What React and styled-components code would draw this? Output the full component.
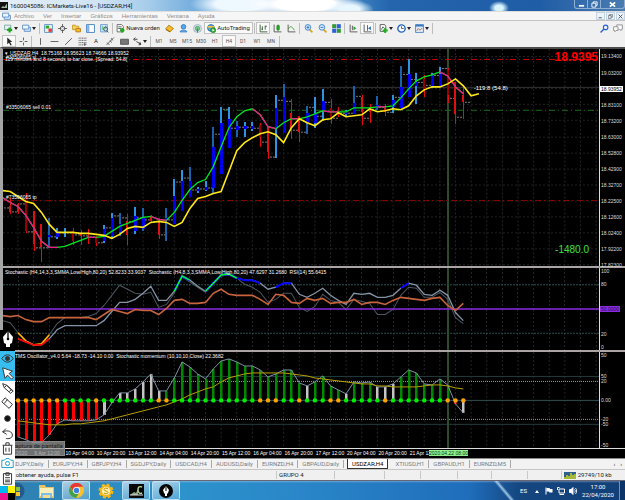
import React from 'react';
import styled, { createGlobalStyle, css } from 'styled-components';

const GlobalStyle = createGlobalStyle`
  * { box-sizing: border-box; }
  body {
    margin: 0;
    background: #000;
    font-family: Roboto, "Liberation Sans", sans-serif;
    font-size: 6px;
    line-height: 8px;
    color: #222;
  }
  button {
    margin: 0;
    padding: 0;
    border: 0;
    background: none;
    font: inherit;
    color: inherit;
  }
  svg { display: block; flex: none; }
`;

const Screen = styled.div`
  position: relative;
  display: flex;
  flex-direction: column;
  min-height: 100vh;
  overflow: hidden;
`;

/* ---------- window frame ---------- */

const TitleBar = styled.header`
  display: flex;
  align-items: center;
  gap: 2px;
  height: 11px;
  color: #111;
  white-space: nowrap;
  background:
    radial-gradient(ellipse 10px 7px at 499px 8px, #d9f4ff 40%, transparent 100%),
    radial-gradient(ellipse 24px 9px at 350px 9px, #e8f7ff 40%, transparent 100%),
    radial-gradient(ellipse 60px 14px at 305px 4px, #fff 50%, transparent 100%),
    radial-gradient(ellipse 50px 14px at 240px 4px, #eef8ff 50%, transparent 100%),
    linear-gradient(90deg, #e3eef7 0, #cfe3f3 100px, #a4cbea 150px, #78b0de 190px, #4a8fcb 340px, #2465ad 390px, #1f5da6 540px, #4a7bb0 625px);
`;

const WindowButtons = styled.div`
  display: flex;
  align-self: flex-start;
  margin-left: auto;
  height: 9px;
  border: 1px solid #8fb0d4;
  border-top: 0;
  border-radius: 0 0 3px 3px;

  button {
    display: flex;
    align-items: center;
    justify-content: center;
    width: 13px;
    border-right: 1px solid #8fb0d4;
  }

  button:last-child {
    width: 23px;
    border-right: 0;
  }
`;

const MenuBar = styled.nav`
  display: flex;
  align-items: center;
  gap: 9px;
  height: 10px;
  padding-left: 2px;
  background: #f6f6f6;
  border-bottom: 1px solid #c4c4c4;
  border-top: 1px solid #ddd;
  color: #8d8d8d;
  font-family: "Liberation Sans", sans-serif;

  > svg { margin-right: -6px; }
`;

const DocButtons = styled.div`
  display: flex;
  gap: 1px;
  margin-left: auto;

  button {
    display: flex;
    align-items: center;
    justify-content: center;
    width: 9px;
    height: 8px;
    border: 1px solid #c3d3e3;
    background: #eaf2fa;
  }
`;

const Toolbar = styled.div`
  display: flex;
  align-items: center;
  height: ${props => props.$height}px;
  padding-left: 2px;
  background: #f0f0f0;
  white-space: nowrap;
`;

const ToolButton = styled.button`
  display: flex;
  align-items: center;
  justify-content: center;
  gap: 1px;
  width: ${props => props.$wide || 14}px;
  height: 12px;
  flex: none;
  ${props => props.$period && css`
    font-size: 5px;
    color: #555;
  `}
  ${props => props.$pressed && css`
    background: #f9f9f9;
    border: 1px solid #c2c2c2;
  `}
`;

const Separator = styled.span`
  flex: none;
  width: 1px;
  height: 11px;
  margin: 0 1px;
  background: #bdbdbd;
`;

const ToolbarEnd = styled.div`
  display: flex;
  margin-left: auto;
`;

/* ---------- chart ---------- */

const ChartWindow = styled.main`
  flex: 1;
  display: flex;
  flex-direction: column;
  background: #000;
  border: solid #8a8a8a;
  border-width: 2px 0 1px 3px;
  border-top-color: #4c4c4c;
  border-left-color: #a5a5a5;
  color: #fff;
  font-family: "Liberation Sans", sans-serif;
  font-size: 5px;
  line-height: 6px;
  white-space: pre;
`;

const Panel = styled.section`
  flex: ${props => props.$share} 1 0;
  display: flex;
  min-height: 0;
  border-bottom: ${props => (props.$last ? '1px solid #ddd' : '2px solid #aaa4a4')};
`;

const Plot = styled.div`
  position: relative;
  flex: 1;
  min-width: 0;
  overflow: hidden;

  svg {
    position: absolute;
    width: 100%;
    height: 100%;
  }
`;

const Axis = styled.div`
  position: relative;
  width: 26px;
  border-left: 1px solid #ddd;
`;

const AxisLabel = styled.span`
  position: absolute;
  left: 0;
  padding: 0 1px;
  transform: translateY(-50%);
  color: #ddd;
  ${props => props.$tone === 'price' && css`
    background: #fff;
    color: #000;
  `}
  ${props => props.$tone === 'middle' && css`
    background: #8a2be2;
    color: #201040;
  `}
`;

const PanelTitle = styled.div`
  position: absolute;
  top: ${props => props.$top || 1}px;
  left: ${props => props.$left || 2}px;
`;

const OrderLabel = styled.div`
  position: absolute;
  left: 3px;
  transform: translateY(-100%);
`;

const BigPrice = styled.div`
  position: absolute;
  top: 2px;
  right: 1px;
  font-size: 12px;
  line-height: 13px;
  font-weight: bold;
  color: #f00;
`;

const Profit = styled.div`
  position: absolute;
  right: 10px;
  bottom: 10px;
  font-size: 10px;
  line-height: 12px;
  color: #3ce03c;
`;

const SpreadNote = styled.div`
  position: absolute;
  font-size: 6px;
  line-height: 8px;
  transform: translateY(-50%);
`;

const TimeAxis = styled.div`
  position: relative;
  display: flex;
  height: 9px;
  padding: 1px 26px 0 0;
  overflow: hidden;
`;

const TimeLabel = styled.span`
  flex: 0 0 5.25%;
`;

const TimeCursor = styled.span`
  position: absolute;
  background: #90ee90;
  color: #064006;
`;

/* ---------- bottom ---------- */

const Tabs = styled.div`
  display: flex;
  align-items: center;
  height: 11px;
  padding-left: 4px;
  background: #f2f2f2;
  border-bottom: 1px solid #c6c6c6;
`;

const Tab = styled.button`
  height: 8px;
  padding: 0 4px;
  flex: none;
  color: #7c7c7c;
  border-right: 1px solid #a8a8a8;
  line-height: 8px;
  ${props => props.$active && css`
    height: 10px;
    margin: 0 3px;
    background: #fff;
    color: #000;
    border: 1px solid #333;
    border-top: 0;
  `}
`;

const TabScroll = styled.div`
  display: flex;
  gap: 5px;
  margin-left: auto;
  padding-right: 3px;
`;

const StatusBar = styled.footer`
  display: flex;
  align-items: center;
  height: 11px;
  background: #f0f0f0;
  border-bottom: 1px solid #667;
  white-space: nowrap;
`;

const StatusCell = styled.div`
  display: flex;
  align-items: center;
  gap: 2px;
  height: 8px;
  flex: ${props => props.$share} 1 0;
  padding-left: 2px;
  border-right: 1px solid #c8c8c8;

  &:last-child { border-right: 0; }
`;

const Taskbar = styled.div`
  display: flex;
  align-items: center;
  gap: 2px;
  height: 19px;
  padding-left: 2px;
  color: #fff;
  background:
    linear-gradient(50deg, transparent 43%, rgba(190, 225, 250, 0.8) 50%, transparent 57%) 82% 0 / 28px 19px no-repeat,
    linear-gradient(180deg, rgba(255, 255, 255, 0.3) 0, transparent 2px),
    linear-gradient(90deg, #2f7fae 0, #2c93cc 180px, #2a86c8 300px, #1f6dbb 470px, #15467f 520px, #123f78 625px);
`;

const TaskButton = styled.button`
  display: flex;
  align-items: center;
  justify-content: center;
  width: 28px;
  height: 19px;
  flex: none;
  ${props => props.$open && css`
    border: 1px solid rgba(210, 240, 255, 0.7);
    border-radius: 2px;
    background: linear-gradient(160deg, rgba(255, 255, 255, 0.6), rgba(190, 225, 245, 0.25));
  `}
`;

const Tray = styled.div`
  display: flex;
  align-items: center;
  gap: 4px;
  margin-left: auto;
`;

const Clock = styled.div`
  width: 34px;
  text-align: center;
`;

const ShowDesktop = styled.button`
  width: 6px;
  height: 19px;
  border-left: 1px solid #6a93bd;
  background: #0d3468;
`;

/* ---------- drawing tool floating over the desktop ---------- */

const PenPanel = styled.aside`
  position: absolute;
  left: 0;
  bottom: 0;
  width: 15px;
  background: #fff;
`;

const PenHead = styled.div`
  display: flex;
  justify-content: center;
  height: 21px;
  background: #000;
`;

const PenButton = styled.button`
  display: flex;
  align-items: center;
  justify-content: center;
  width: 15px;
  height: 15px;
  background: ${props => (props.$on ? '#38bdf0' : '#fff')};
`;

const Swatches = styled.div`
  display: grid;
  grid-template-columns: 1fr 1fr;
  grid-auto-rows: 7px;
`;

const Swatch = styled.button`
  background: ${props => props.$color};
`;

const Tooltip = styled.div`
  position: absolute;
  left: 9px;
  bottom: 44px;
  height: 15px;
  padding: 0 1px;
  background: rgba(150, 150, 150, 0.75);
  border: 1px solid #888;
  color: #222;
  line-height: 7px;
  white-space: nowrap;
`;

/* ---------- data ---------- */

const X0 = 2.4;
const STEP = 7.812;
const x = i => X0 + STEP * i;

// high, low, body top, body bottom, close, direction (1 up, 0 down)
const candles = [
  [195, 208, 198, 206, 208, 0], [199, 215, 207, 213, 212, 0], [204, 215, 205, 213, 204, 0],
  [193, 234, 200, 232, 232, 0], [212, 252, 212, 245, 248, 0], [225, 263, 225, 248, 248, 0],
  [219, 249, 236, 238, 237, 1], [229, 240, 232, 238, 233, 1], [229, 238, 233, 234, 233, 1],
  [229, 246, 232, 242, 235, 0], [231, 246, 235, 237, 236, 0], [230, 245, 236, 239, 237, 0],
  [237, 247, 239, 244, 243, 0], [226, 244, 230, 242, 228, 1], [214, 240, 219, 237, 216, 1],
  [214, 237, 225, 233, 218, 1], [215, 246, 222, 236, 222, 0], [208, 235, 217, 232, 218, 1],
  [209, 232, 218, 230, 220, 1], [216, 223, 217, 222, 222, 0], [219, 240, 222, 236, 235, 0],
  [209, 242, 219, 222, 220, 1], [179, 225, 197, 225, 182, 1], [170, 212, 181, 212, 178, 1],
  [167, 198, 181, 198, 190, 1], [187, 193, 189, 191, 189, 1], [181, 191, 187, 190, 188, 1],
  [127, 193, 147, 188, 134, 1], [107, 174, 123, 174, 109, 1], [107, 148, 119, 148, 128, 1],
  [121, 137, 126, 130, 127, 1], [122, 137, 126, 129, 127, 1], [122, 131, 126, 129, 128, 1],
  [123, 147, 125, 137, 142, 0], [127, 159, 127, 152, 157, 0], [95, 158, 108, 128, 100, 1],
  [84, 133, 97, 133, 101, 1], [99, 139, 113, 128, 130, 0], [116, 142, 116, 132, 132, 0],
  [106, 134, 113, 123, 107, 1], [97, 128, 113, 123, 116, 1], [89, 121, 101, 110, 102, 1],
  [99, 124, 108, 118, 118, 0], [107, 117, 110, 114, 113, 0], [110, 117, 111, 114, 113, 1],
  [86, 114, 103, 114, 96, 1], [95, 125, 97, 112, 118, 0], [104, 123, 108, 112, 109, 0],
  [96, 110, 105, 108, 107, 1], [104, 116, 107, 112, 112, 0], [95, 113, 100, 107, 97, 1],
  [66, 108, 87, 108, 74, 1], [59, 97, 74, 97, 79, 1], [73, 104, 82, 86, 82, 1],
  [75, 97, 79, 90, 85, 0], [73, 88, 75, 87, 75, 1], [67, 87, 74, 87, 68, 1],
  [68, 103, 70, 95, 98, 0], [82, 124, 82, 114, 117, 0], [86, 119, 95, 102, 102, 0],
];

const fast = [
  198, 203, 207, 216, 228, 242, 248, 248, 247, 244, 241, 238, 238, 237, 232, 227, 224, 221, 218, 217,
  220, 221, 213, 201, 190, 183, 180, 167, 147, 128, 117, 111, 109, 115, 127, 129, 123, 119, 119, 117,
  114, 111, 112, 112, 112, 108, 108, 108, 107, 107, 106, 98, 89, 81, 77, 75, 72, 76, 87, 94,
];
const falling = [[0, 7], [11, 12], [19, 21], [32, 35], [37, 38], [41, 43], [48, 49], [56, 59]];

const slow = [
  191, 192, 197, 202, 204, 213, 225, 233, 233, 233, 234, 234, 235, 236, 239, 235, 229, 227, 228, 223,
  222, 223, 227, 223, 209, 199, 197, 194, 192, 172, 151, 143, 138, 134, 132, 135, 143, 128, 119, 123,
  126, 120, 119, 113, 117, 116, 115, 109, 112, 111, 109, 110, 106, 96, 90, 87, 87, 84, 79, 86, 96, 94,
];

const rsi = [
  316, 317, 316, 320, 322, 322, 318, 318, 318, 318, 318, 318, 320, 315, 310, 312, 314, 310, 311, 311,
  315, 309, 301, 300, 304, 304, 303, 294, 290, 295, 296, 296, 296, 300, 305, 295, 296, 303, 304, 299,
  301, 299, 304, 303, 303, 300, 305, 303, 303, 305, 301, 298, 299, 300, 301, 299, 298, 306, 311, 304,
];

// starts at bar 2
const stoch = [
  339, 342, 345, 345, 339, 330, 326, 326, 326, 326, 326, 321, 312, 303, 303, 300, 294, 287, 301, 301,
  292, 277, 281, 287, 292, 284, 276, 275, 279, 281, 281, 284, 290, 288, 284, 284, 295, 298, 294, 289,
  296, 301, 305, 294, 295, 294, 298, 298, 296, 289, 284, 286, 295, 296, 291, 296, 313, 321,
];

const stochFast = [
  321, 323, 333, 341, 345, 344, 335, 324, 318, 318, 318, 317, 314, 306, 296, 286, 290, 294, 295, 293,
  308, 305, 294, 278, 283, 288, 293, 285, 277, 276, 279, 285, 288, 293, 303, 300, 294, 294, 308, 312,
  307, 295, 301, 303, 310, 300, 302, 304, 315, 315, 310, 296, 288, 289, 298, 298, 293, 300, 318, 324,
];

// starts at bar 2
const momentum = [
  437, 440, 443, 443, 435, 424, 420, 421, 421, 421, 420, 415, 403, 393, 393, 389, 382, 374, 391, 391,
  378, 362, 367, 374, 379, 369, 361, 359, 362, 366, 366, 370, 377, 374, 370, 370, 383, 386, 382, 376,
  386, 390, 394, 382, 383, 382, 387, 387, 384, 377, 370, 373, 384, 385, 379, 385, 404, 413,
];
const greyBars = [13, 14, 15, 16, 17, 18, 19, 20, 39, 44, 48, 49, 50, 59];
const orangeDots = [2, 3, 4, 5, 6, 7, 12, 20, 21, 33, 34, 35, 38, 42, 43, 49, 57, 58, 59];

const signal = [
  421, 422, 423, 424, 425, 425, 425, 424, 424, 423, 422, 421, 419, 417, 415, 413, 411, 409, 407, 405,
  402, 399, 395, 392, 389, 387, 382, 378, 376, 374, 373, 373, 373, 373, 373, 374, 375, 376, 378, 379,
  380, 381, 382, 383, 384, 384, 386, 386, 387, 387, 387, 387, 386, 385, 385, 386, 388, 389,
];

const priceLabels = [
  '19.13400', '19.03200', '18.93952', '18.83100', '18.73200', '18.63000', '18.52800',
  '18.42900', '18.32700', '18.22500', '18.12600', '18.02400', '17.92200', '17.82300',
];

const times = [
  '7 Apr 2020', '9 Apr 12:00',
  '10 Apr 04:00', '10 Apr 20:00', '13 Apr 12:00', '14 Apr 04:00', '14 Apr 20:00', '15 Apr 12:00',
  '16 Apr 04:00', '16 Apr 20:00', '17 Apr 12:00', '20 Apr 04:00', '20 Apr 20:00', '21 Apr 12:00',
];

const menus = ['Archivo', 'Ver', 'Insertar', 'Gráficos', 'Herramientas', 'Ventana', 'Ayuda'];
const periods = ['M1', 'M5', 'M15', 'M30', 'H1', 'H4', 'D1', 'W1', 'MN'];
const tabs = [
  'USDJPY,Daily', 'EURJPY,H4', 'GBPJPY,H4', 'SGDJPY,Daily', 'USDCAD,H4', 'AUDUSD,Daily',
  'EURNZD,H4', 'GBPAUD,Daily', 'USDZAR,H4', 'XTIUSD,H1', 'GBPAUD,H1', 'EURNZD,M5',
];

const path = (values, from = 0) => values.map((y, i) => `${x(i + from).toFixed(1)},${y}`).join(' ');
const slice = (values, a, b, offset = 0) => path(values.slice(a - offset, b + 1 - offset), a);

/* ---------- chart parts ---------- */

const Line = ({ points, color, width = 1, ...rest }) => (
  <polyline points={points} fill="none" stroke={color} strokeWidth={width} {...rest} />
);

const Level = ({ y, color, dash, width = 1 }) => (
  <line x1="3" x2="599" y1={y} y2={y} stroke={color} strokeWidth={width} strokeDasharray={dash} />
);

const Grid = ({ top, bottom }) => (
  <g stroke="#242424" strokeDasharray="2 2" shapeRendering="crispEdges">
    {Array.from({ length: 38 }, (_, i) => (
      <line key={i} x1={x(i * 2 + 2)} x2={x(i * 2 + 2)} y1={top} y2={bottom} />
    ))}
  </g>
);

const Cursor = () => <rect x="447" y="40" width="2" height="420" fill="#2c4a2c" />;

const Candle = ({ index, data }) => {
  const [high, low, top, bottom, close, up] = data;
  const cx = Math.round(x(index));
  return (
    <g shapeRendering="crispEdges">
      {up
        ? <rect x={cx - 1} y={high} width="2" height={low - high} fill={index % 3 ? '#2c94e4' : '#1a62ac'} />
        : <rect x={cx} y={high} width="1" height={low - high} fill="#e80c0c" />}
      <rect x={cx - 1} y={top} width={up ? 3 : 2} height={bottom - top} fill={up ? '#0000f0' : index % 3 ? '#e01010' : '#980000'} />
      <line x1={cx + 2} x2={cx + 7} y1={close + 0.5} y2={close + 0.5} stroke="#7c7c7c" strokeDasharray="2 1" />
    </g>
  );
};

const scale = (y, top, height) => ({ top: `${((y - top) / height) * 100}%` });

const PricePanel = () => (
  <Panel $share={220}>
    <Plot>
      <svg viewBox="3 49 596 218" preserveAspectRatio="none">
        <Grid top={49} bottom={267} />
        {priceLabels.map((label, i) => (
          <Level key={label} y={Math.round(56 + 16.1 * i) + 0.5} color="#222" dash="2 2" />
        ))}
        <Cursor />
        <Level y={59.5} color="#c80000" dash="6 3 1 3" />
        <Level y={87.5} color="#333" />
        <Level y={110.5} color="#1d6b1d" dash="6 3 1 3" />
        <Level y={201} color="#8c0000" dash="6 3 2 3" />
        {candles.map((data, i) => <Candle key={i} index={i} data={data} />)}
        <Line points={path(fast)} color="#00e620" width={1.3} />
        {falling.map(([a, b]) => (
          <Line key={a} points={slice(fast, a, b)} color="#f5148c" width={1.3} />
        ))}
        <Line points={path(slow)} color="#ffe81a" width={1.6} />
      </svg>
      <PanelTitle $left={7}>USDZAR,H4  18.75168 18.95623 18.74666 18.93952</PanelTitle>
      <PanelTitle $left={2}>▾</PanelTitle>
      <OrderLabel style={scale(60, 49, 218)}>#33506065 sl</OrderLabel>
      <PanelTitle $top={7}>119 minutes and 8 seconds to bar close. [Spread: 54.8]</PanelTitle>
      <OrderLabel style={scale(110, 49, 218)}>#33506065 sell 0.01</OrderLabel>
      <OrderLabel style={scale(201, 49, 218)}>#73506065 tp</OrderLabel>
      <SpreadNote style={{ ...scale(88, 49, 218), left: '79%' }}>-119:8 (54.8)</SpreadNote>
      <BigPrice>18.9395</BigPrice>
      <Profit>-1480.0</Profit>
    </Plot>
    <Axis>
      {priceLabels.map((label, i) => (
        <AxisLabel key={label} $tone={i === 2 ? 'price' : ''} style={scale(56.5 + 16.1 * i, 49, 218)}>
          {label}
        </AxisLabel>
      ))}
    </Axis>
  </Panel>
);

const StochasticPanel = () => (
  <Panel $share={83}>
    <Plot>
      <svg viewBox="3 269 596 81" preserveAspectRatio="none">
        <Grid top={269} bottom={350} />
        <Level y={285.5} color="#2f4f4f" dash="2 1" />
        <Level y={333.5} color="#2f4f4f" dash="2 1" />
        <Cursor />
        <Line points={path(stochFast)} color="#4c5660" />
        <Line points={path(stoch, 2)} color="#8493a6" width={1.3} />
        <Line points={slice(stochFast, 2, 6)} color="#ffb400" width={1.6} />
        <Line points={slice(stoch, 2, 6, 2)} color="#f00" width={1.6} />
        <Line points={slice(stoch, 30, 33, 2)} color="#0000ff" width={2} />
        <Line points={slice(stoch, 35, 37, 2)} color="#0000ff" width={2} />
        <Line points={slice(stoch, 51, 52, 2)} color="#0000ff" width={2} />
        <Line points={slice(stoch, 22, 24, 2)} color="#0000ff" width={2.5} />
        <Line points={slice(stoch, 26, 30, 2)} color="#0000ff" width={2.5} />
        <Line points={slice(stoch, 22, 24, 2)} color="#00ff20" width={1.5} />
        <Line points={slice(stoch, 26, 30, 2)} color="#00ff20" width={1.5} />
        <Level y={309.5} color="#8a2be2" width={1.5} />
        <Line points={path(rsi)} color="#c8643c" width={1.6} />
      </svg>
      <PanelTitle>Stochastic (H4,14,3,3,SMMA,Low/High,80,20) 52.8233 33.9037  Stochastic (H4,8,3,3,SMMA,Low/High,80,20) 47.6297 31.2680  RSI(14) 55.6415</PanelTitle>
    </Plot>
    <Axis>
      <AxisLabel style={scale(272, 269, 81)}>100</AxisLabel>
      <AxisLabel style={scale(285, 269, 81)}>80</AxisLabel>
      <AxisLabel $tone="middle" style={scale(309, 269, 81)}>50.0000</AxisLabel>
      <AxisLabel style={scale(334, 269, 81)}>20</AxisLabel>
      <AxisLabel style={scale(347, 269, 81)}>0</AxisLabel>
    </Axis>
  </Panel>
);

const barColor = (index, y) => {
  if (greyBars.includes(index)) return '#c4c4c4';
  return y > 400 ? '#f00' : '#008800';
};

const MomentumPanel = () => (
  <Panel $share={97} $last>
    <Plot>
      <svg viewBox="3 352 596 96" preserveAspectRatio="none">
        <Grid top={352} bottom={448} />
        <Level y={376.5} color="#243c3c" />
        <Level y={424.5} color="#243c3c" />
        <Level y={381.5} color="#9a9a9a" dash="1 1" />
        <Level y={419.5} color="#9a9a9a" dash="1 1" />
        <Level y={400.5} color="#2f4f4f" />
        <Cursor />
        {momentum.map((y, i) => (
          <rect
            key={i}
            x={Math.round(x(i + 2)) - 1}
            y={Math.min(y, 400)}
            width={y > 400 && i < 12 ? 3 : 2.5}
            height={Math.abs(y - 400)}
            fill={barColor(i + 2, y)}
          />
        ))}
        <Line points={path(momentum, 2)} color="#8090a8" />
        <Line points={path(signal, 2)} color="#b8a000" />
        {momentum.map((y, i) => (
          <circle
            key={i}
            cx={x(i + 2)}
            cy="400.5"
            r="2.2"
            fill={orangeDots.includes(i + 2) ? '#ffa500' : '#00f000'}
          />
        ))}
      </svg>
      <PanelTitle $left={12}>TMS Oscillator_v4.0 5.64 -18.73 -14.10 0.00  Stochastic momentum (10,10,10,Close) 22.3682</PanelTitle>
    </Plot>
    <Axis>
      <AxisLabel style={scale(355, 352, 96)}>50</AxisLabel>
      <AxisLabel style={scale(376, 352, 96)}>50</AxisLabel>
      <AxisLabel style={scale(381, 352, 96)}>20</AxisLabel>
      <AxisLabel style={scale(400, 352, 96)}>0.00</AxisLabel>
      <AxisLabel style={scale(419, 352, 96)}>-20</AxisLabel>
      <AxisLabel style={scale(424, 352, 96)}>-50</AxisLabel>
      <AxisLabel style={scale(445, 352, 96)}>-50</AxisLabel>
    </Axis>
  </Panel>
);

/* ---------- icons ---------- */

const Icon = ({ size = 9, children, ...rest }) => (
  <svg width={size} height={size} viewBox="0 0 16 16" fill="none" stroke="#555" strokeWidth="1.6" {...rest}>
    {children}
  </svg>
);

const Caret = () => (
  <svg width="4" height="3" viewBox="0 0 4 3"><path d="M0 0h4L2 3z" fill="#222" /></svg>
);

const icons = {
  newChart: <Icon><path d="M1 2h11v8H1z" fill="#eef" stroke="#7a9" /><path d="M10 6v9M5.500 10.500h9" stroke="#1fa81f" strokeWidth="4" /></Icon>,
  profiles: <Icon><path d="M4 6h11v7H4z" fill="#dcebfa" stroke="#5c8fc4" /><path d="M1 2h11v7H1z" fill="#eef6ff" stroke="#5c8fc4" /></Icon>,
  market: <Icon><path d="M1 1h14v14H1z" fill="#e6f5e6" stroke="#5c8fc4" /><path d="M3 3h6v5H3z" fill="#2faa2f" stroke="none" /><path d="M8 8h6v6H8z" fill="#e33" stroke="none" /></Icon>,
  dataWindow: <Icon><circle cx="8" cy="8" r="4" /><path d="M8 0v6M8 10v6M0 8h6M10 8h6" /></Icon>,
  navigator: <Icon><path d="M1 2h5l1 2h5v6H1z" fill="#f5d35a" stroke="#c99a20" /><path d="M7 8h8v6H7z" fill="#f9b938" stroke="#b87a10" /></Icon>,
  terminal: <Icon><path d="M1 1h14v14H1z" fill="#fff" stroke="#3f7fc4" /><path d="M2 2h4v12H2z" fill="#7fb2e8" stroke="none" /></Icon>,
  tester: <Icon><path d="M1 1h12v13H1z" fill="#dcebfa" stroke="#6c9bd0" /><path d="M4 3v8M7 5v6M10 3v6" stroke="#4b7" /><circle cx="10" cy="9" r="3.500" stroke="#456" /><path d="M12 12l3 3" stroke="#456" /></Icon>,
  order: <Icon><path d="M2 1h8l3 3v10H2z" fill="#fff" stroke="#666" /><path d="M4 5h6M4 8h5" /><path d="M11 7v8M7 11h8" stroke="#1fa81f" strokeWidth="3.500" /></Icon>,
  editor: <Icon><path d="M1 9l6-7 8 6-6 6z" fill="#f5b92a" stroke="#b57a10" /><path d="M2 10l7 4" stroke="#8a5c10" /></Icon>,
  community: <Icon><circle cx="8" cy="5" r="4" fill="#5aa8ec" stroke="#2c78c8" /><path d="M2 14c0-4 12-4 12 0z" fill="#8cc4f4" stroke="#2c78c8" /></Icon>,
  signals: <Icon><circle cx="8" cy="8" r="7" stroke="#9ab" /><circle cx="8" cy="8" r="4" fill="#7cc47c" stroke="#4a9" /><path d="M8 8v7" stroke="#286" /></Icon>,
  auto: <Icon><circle cx="7" cy="7" r="6" fill="#5aa8dc" stroke="#276fa8" /><path d="M1 5h12" stroke="#f5c23a" strokeWidth="3" /><circle cx="11" cy="11" r="4.500" fill="#2fae2f" stroke="#187818" strokeWidth="1" /><path d="M9.500 8.500l4 2.500-4 2.500z" fill="#fff" stroke="none" /></Icon>,
  bars: <Icon><path d="M2 1v13h13M6 4v7M4 9h2M11 3v7M11 4h3" stroke="#3a5a3a" /></Icon>,
  candles: <Icon><path d="M2 1v13h13" /><path d="M9 1v12" stroke="#1a8a1a" /><path d="M7 3h4v7H7z" fill="#27b827" stroke="#1a8a1a" /></Icon>,
  lineChart: <Icon><path d="M2 1v13h13" /><path d="M2 9c4-6 6-6 11 2" stroke="#3a9a3a" /></Icon>,
  zoomIn: <Icon><circle cx="7" cy="6" r="5" fill="#d6ebff" stroke="#3a7fd0" /><path d="M4.500 6h5M7 3.500v5" stroke="#2a6fc0" /><path d="M10 10l5 5" stroke="#d8a520" strokeWidth="3" /></Icon>,
  zoomOut: <Icon><circle cx="7" cy="6" r="5" fill="#d6ebff" stroke="#3a7fd0" /><path d="M4.500 6h5" stroke="#2a6fc0" /><path d="M10 10l5 5" stroke="#d8a520" strokeWidth="3" /></Icon>,
  tile: <Icon><g stroke="#fff" strokeWidth=".6"><path d="M0 0h8v8H0zM8 8h8v8H8z" fill="#2f9c2f" /><path d="M8 0h8v8H8zM0 8h8v8H0z" fill="#2f5fd0" /></g></Icon>,
  autoScroll: <Icon><path d="M2 1v13h13M6 3v8" /><path d="M8 4l5 3.500L8 11z" fill="#2a9c2a" stroke="none" /></Icon>,
  shift: <Icon><path d="M2 1v13h13M8 2v10" /><path d="M14 4L9 7.500l5 3.500z" fill="#2a6fc0" stroke="none" /></Icon>,
  indicators: <Icon><path d="M2 1h8l2 3v9H2z" fill="#fff" /><path d="M4 10l3-5 3 3" /><path d="M11 7v9M6.500 11.500h9" stroke="#1fb01f" strokeWidth="3.500" /></Icon>,
  clock: <Icon><circle cx="8" cy="8" r="6.500" fill="#fff" stroke="#2465b8" strokeWidth="2.500" /><path d="M8 4v4h4" /></Icon>,
  template: <Icon><path d="M1 1h14v14H1z" fill="#dcebfa" stroke="#4f86c0" /><path d="M1 3h14" stroke="#3a78c0" strokeWidth="3" /><path d="M3 12l3-4 3 3 4-4" stroke="#c63" /></Icon>,
  search: <Icon><circle cx="10" cy="6" r="4" fill="#eaf3ff" stroke="#2a62d0" strokeWidth="2" /><path d="M7 9l-6 6" stroke="#2a62d0" strokeWidth="2.500" /></Icon>,
  chat: <Icon size={10}><path d="M6 3h9v7h-2v2l-3-2H6z" fill="#fff" stroke="#999" /><path d="M1 6h7v6H5l-2 2v-2H1z" fill="#fff" stroke="#999" /></Icon>,
  pointer: <Icon><path d="M4 1v12l3-3 3 5 2-1-3-5h4z" fill="#222" stroke="none" /></Icon>,
  cross: <Icon><path d="M8 1v5M8 10v5M1 8h5M10 8h5" /></Icon>,
  vline: <Icon><path d="M8 2v12" /></Icon>,
  hline: <Icon><path d="M1 8h14" /></Icon>,
  trend: <Icon><path d="M2 14L14 2" /></Icon>,
  fibo: <Icon><path d="M1 2h14M1 6h14M1 10h14M1 14h8" strokeDasharray="2 1" /><path d="M12 11v5M10 13h5" /></Icon>,
  channel: <Icon><path d="M1 14L14 1M2 10l4 4M7 6l3 4M9 2l3 4" /></Icon>,
  rect: <Icon><path d="M1 4h14v9H1z" fill="#777" /></Icon>,
  arrows: <Icon><path d="M2 4h6M4 1L1 4l3 3M6 8l8 5M10 14l4-1-2-4" stroke="#333" /></Icon>,
};

const mainTools = [
  ['newChart', 'caret'], ['profiles', 'caret'], null, 'market', 'dataWindow', 'navigator', 'terminal', 'tester', null,
];

const renderTools = list => list.map((item, i) => {
  if (!item) return <Separator key={i} />;
  const hasCaret = Array.isArray(item);
  const name = hasCaret ? item[0] : item;
  return (
    <ToolButton key={name} aria-label={name} $wide={hasCaret ? 18 : 14} $pressed={['bars', 'shift', 'pointer'].includes(name)}>
      {icons[name]}
      {hasCaret && <Caret />}
    </ToolButton>
  );
});

const Pen = () => (
  <svg width="18" height="18" viewBox="0 0 18 18">
    <path d="M9 1l5 6-1 6-2 1v3H7v-3l-2-1-1-6z" fill="#fff" />
    <path d="M9 1v8" stroke="#000" strokeWidth="1.300" />
    <circle cx="9" cy="9" r="1.300" fill="#000" />
  </svg>
);

const PenIcon = ({ children }) => (
  <svg width="13" height="13" viewBox="0 0 16 16" fill="none" stroke="#333" strokeWidth="1.200">{children}</svg>
);

const penTools = [
  ['Ver', <path d="M1 8c4-6 10-6 14 0-4 6-10 6-14 0z" />, true, <circle cx="8" cy="8" r="2.500" fill="#333" />],
  ['Cursor', <path d="M2 1l3 13 3-4 5 5 2-2-5-5 4-3z" fill="#fff" />, true],
  ['Lápiz', <path d="M2 2l2 5 8 7 3-3-8-7zM4 7l3-3M10 12l3-3M7 4l7 7" />],
  ['Borrador', <path d="M5 1L1 6l9 8 4-5zM4 8l4-5" />],
  ['Tamaño', <circle cx="8" cy="8" r="3.500" fill="#111" />],
  ['Deshacer', <path d="M6 2L2 6l5 3M2 6c7-3 12 0 12 4s-5 5-8 4" />],
  ['Borrar', <path d="M2 4h12M6 4V1h4v3M3 4v11h10V4M6 7v5M10 7v5" />],
  ['Captura', <path d="M1 4h3l2-2h4l2 2h3v9H1z" stroke="#1b9cc8" />, false, <circle cx="8" cy="8" r="2.500" stroke="#1b9cc8" />],
  ['Pizarra', <path d="M3 2h10v13H3zM6 1h4v3H6zM5 7h6M5 10h6M5 12h6" />],
];

/* ---------- app ---------- */

const App = () => (
  <>
    <GlobalStyle />
    <Screen>
      <TitleBar>
        <svg width="8" height="8" viewBox="0 0 16 16"><path d="M0 0h16v16H0z" fill="#111" /><path d="M2 12l4-4 3 2 5-7v9z" fill="#9db89d" /></svg>
        1600045086: ICMarkets-Live16 - [USDZAR,H4]
        <WindowButtons>
          <button aria-label="Minimizar"><Icon size={7} stroke="#fff" strokeWidth="4"><path d="M2 11h12" /></Icon></button>
          <button aria-label="Restaurar"><Icon size={7} stroke="#fff" strokeWidth="2"><path d="M5 5V2h9v8h-3M2 5h9v9H2z" /></Icon></button>
          <button aria-label="Cerrar"><Icon size={7} stroke="#fff" strokeWidth="4"><path d="M2 3l12 10M14 3L2 13" /></Icon></button>
        </WindowButtons>
      </TitleBar>

      <MenuBar>
        {icons.profiles}
        {menus.map(name => <button key={name}>{name}</button>)}
        <DocButtons>
          <button aria-label="Minimizar gráfico"><Icon size={5} strokeWidth="3"><path d="M2 12h10" /></Icon></button>
          <button aria-label="Restaurar gráfico"><Icon size={5} strokeWidth="2"><path d="M5 5V1h9v9h-4M1 5h9v9H1z" /></Icon></button>
          <button aria-label="Cerrar gráfico"><Icon size={5} strokeWidth="3"><path d="M2 2l12 12M14 2L2 14" /></Icon></button>
        </DocButtons>
      </MenuBar>

      <Toolbar $height={14}>
        {renderTools(mainTools)}
        <ToolButton $wide={48}>{icons.order}Nueva orden</ToolButton>
        {renderTools(['editor', 'community', 'signals'])}
        <ToolButton $wide={49} $pressed>{icons.auto}AutoTrading</ToolButton>
        {renderTools([
          null, 'bars', 'candles', 'lineChart', null, 'zoomIn', 'zoomOut', 'tile', null, 'autoScroll', 'shift', null,
          ['indicators'], ['clock'], ['template'], null,
        ])}
        <ToolbarEnd>{renderTools(['search', 'chat'])}</ToolbarEnd>
      </Toolbar>
      <Toolbar $height={12}>
        {renderTools(['pointer', 'cross', null, 'vline', 'hline', 'trend', 'fibo'])}
        <ToolButton>A</ToolButton>
        {renderTools(['channel', 'rect', ['arrows'], null])}
        {periods.map(name => (
          <ToolButton key={name} $period $pressed={name === 'H4'}>{name}</ToolButton>
        ))}
        <Separator />
      </Toolbar>

      <ChartWindow>
        <PricePanel />
        <StochasticPanel />
        <MomentumPanel />
        <TimeAxis>
          {times.map(time => <TimeLabel key={time}>{time}</TimeLabel>)}
          <TimeCursor style={{ left: '68.5%' }}>2020.04.22 08:00</TimeCursor>
        </TimeAxis>
      </ChartWindow>

      <Tabs>
        {tabs.map(name => <Tab key={name} $active={name === 'USDZAR,H4'}>{name}</Tab>)}
        <TabScroll>
          <button aria-label="Anterior">‹</button>
          <button aria-label="Siguiente">›</button>
        </TabScroll>
      </Tabs>

      <StatusBar>
        <StatusCell $share={286}>Para obtener ayuda, pulse F1</StatusCell>
        <StatusCell $share={57}>GRUPO 4</StatusCell>
        <StatusCell $share={49} />
        <StatusCell $share={35} />
        <StatusCell $share={35} />
        <StatusCell $share={33} />
        <StatusCell $share={34} />
        <StatusCell $share={32} />
        <StatusCell $share={64}>
          <svg width="12" height="7" viewBox="0 0 12 7">
            <path d="M0 0h12v7H0z" fill="#2f5f8f" />
            <path d="M0 5h2v2H0zM2 3h2v4H2zM4 4h2v3H4zM6 1h2v6H6zM8 3h2v4H8zM10 2h2v5h-2z" fill="#a6b83a" />
          </svg>
          29749/10 kb
        </StatusCell>
      </StatusBar>

      <Taskbar>
        <TaskButton aria-label="Inicio">
          <svg width="18" height="18" viewBox="0 0 18 18"><circle cx="9" cy="9" r="8.500" fill="#245a8c" /><path d="M4 5h4v4H4z" fill="#e8642a" /><path d="M9 5h4v4H9z" fill="#8cc43a" /><path d="M4 10h4v4H4z" fill="#3aa0e8" /><path d="M9 10h4v4H9z" fill="#f5c52a" /></svg>
        </TaskButton>
        <TaskButton aria-label="Explorador">
          <svg width="17" height="16" viewBox="0 0 17 16"><path d="M1 2h6l1 2h8v11H1z" fill="#e5c268" /><path d="M2 5h13v8H2z" fill="#fbeeb8" /><path d="M3 10h11v5H3z" fill="#7cc0ea" /><path d="M5 12h7v3H5z" fill="#f5dc8c" /></svg>
        </TaskButton>
        <TaskButton $open aria-label="Chrome">
          <svg width="15" height="15" viewBox="0 0 16 16"><circle cx="8" cy="8" r="8" fill="#fbc02d" /><path d="M1.100 4A8 8 0 0 1 15 4H8L5 9z" fill="#e53935" /><path d="M1.100 4A8 8 0 0 0 7.500 16L11 10H5z" fill="#43a047" /><circle cx="8" cy="8" r="3.700" fill="#fff" /><circle cx="8" cy="8" r="2.900" fill="#3b7de0" /></svg>
        </TaskButton>
        <TaskButton aria-label="Ajustes">
          <svg width="16" height="16" viewBox="0 0 16 16"><circle cx="8" cy="8" r="6" fill="#f5b81c" stroke="#f5b81c" strokeWidth="3" strokeDasharray="2.700 2" /><circle cx="8" cy="8" r="4" fill="#fff3b0" /><path d="M10 6c-1-1.300-4-1-4 .5S10 8 10 9.500 7 11 6 10" fill="none" stroke="#c98a00" /></svg>
        </TaskButton>
        <TaskButton $open aria-label="MetaTrader">
          <svg width="15" height="14" viewBox="0 0 15 14"><path d="M0 0h15v14H0z" fill="#080808" /><path d="M1 11l4-3 2 1 2-4v6z" fill="#8aa88a" /><path d="M13 3c-3-1-4 0-4 3s2 4 4 3" fill="none" stroke="#bcd8a0" strokeWidth="1.400" /><path d="M1 11h13" stroke="#ddd" /></svg>
        </TaskButton>
        <TaskButton $open aria-label="Epic Pen">
          <svg width="14" height="14" viewBox="0 0 14 14"><circle cx="7" cy="7" r="7" fill="#050505" /><path d="M7 2l3 4-1 3-1 1v2H6v-2L5 9 4 6z" fill="#fff" /><path d="M7 2v5" stroke="#000" /></svg>
        </TaskButton>
        <Tray>
          <span>ES</span>
          <svg width="10" height="8" viewBox="0 0 10 8"><path d="M4 6l2-3 2 3z" fill="#fff" /></svg>
          <Icon size={8} stroke="#fff" strokeWidth="2"><path d="M2 1v14" /><path d="M3 2h6l1 2h5v7H9L8 9H3z" fill="#fff" stroke="none" /></Icon>
          <Icon size={8} stroke="#fff" strokeWidth="2"><path d="M4 4h11v8H4zM1 1v5M5 15h9M1 1h4" /></Icon>
          <Icon size={8} stroke="#fff" strokeWidth="1.800"><path d="M1 5h3l4-4v14l-4-4H1z" fill="#fff" /><path d="M11 5c2 2 2 4 0 6M13 2c3 4 3 8 0 12" /></Icon>
          <Clock>17:00<br />22/04/2020</Clock>
          <ShowDesktop aria-label="Mostrar escritorio" />
        </Tray>
      </Taskbar>

      <Tooltip>Captura de pantalla</Tooltip>
      <PenPanel>
        <PenHead><Pen /></PenHead>
        {penTools.map(([name, shape, on, extra]) => (
          <PenButton key={name} $on={on} aria-label={name}><PenIcon>{shape}{extra}</PenIcon></PenButton>
        ))}
        <Swatches>
          {['#00b7ef', '#fff200', '#f0148c', '#000'].map(color => (
            <Swatch key={color} $color={color} aria-label={color} />
          ))}
        </Swatches>
      </PenPanel>
    </Screen>
  </>
);

export default App;
